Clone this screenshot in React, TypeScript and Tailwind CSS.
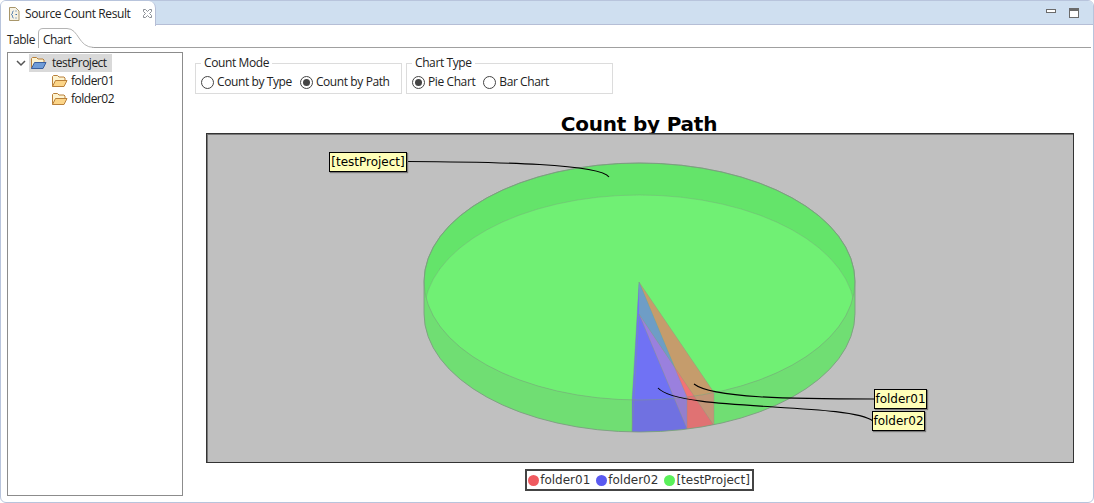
import React from "react";

const ui = { fontFamily: '"Open Sans", "Liberation Sans", sans-serif' };
const dj = { fontFamily: '"DejaVu Sans", sans-serif' };

function Folder({ open = false }: { open?: boolean }) {
  return (
    <svg width="17" height="14" viewBox="0 0 17 14" className="shrink-0">
      <path d="M1.5 12.5V2.5l1-1h4l1.500 1.500h5l1 1v2" fill="#fdf3d0" stroke="#b9803a" />
      <path
        d="M1.5 12.5l3-6h11.500l-3 6z"
        fill={open ? "#6f9cd8" : "#fcd588"}
        stroke={open ? "#3b5f9e" : "#b9803a"}
      />
    </svg>
  );
}

function Radio({ checked, label }: { checked?: boolean; label: string }) {
  return (
    <span className="flex items-center gap-[3px]">
      <span className="w-[13px] h-[13px] rounded-full border border-[#444] bg-white flex items-center justify-center">
        {checked && <span className="w-[7px] h-[7px] rounded-full bg-[#444]" />}
      </span>
      <span>{label}</span>
    </span>
  );
}

function Group({ title, w, children }: { title: string; w: string; children: React.ReactNode }) {
  return (
    <fieldset className={`${w} h-[37px] border border-[#dcdcdc] pl-[5px] flex`}>
      <legend className="px-[3px] text-[12px] leading-[12px] text-[#222]">{title}</legend>
      <div className="flex items-start gap-[8px] text-[12px] leading-[16px] text-[#222] mt-[5px]">{children}</div>
    </fieldset>
  );
}

function Tip({ text, className }: { text: string; className: string }) {
  return (
    <div
      style={dj}
      className={`absolute h-[20px] bg-[#ffffb8] border border-black shadow-[1px_1px_1px_#777] text-[12px] leading-[18px] text-black text-center tracking-normal whitespace-nowrap ${className}`}
    >
      {text}
    </div>
  );
}

function Pie() {
  const cx = 639.5, rx = 215.5, ry = 118.5, ty = 281.5, by = 313.5;
  const T = "639,282", B = "639,314";
  const hull = `M${cx - rx} ${ty} A${rx} ${ry} 0 0 1 ${cx + rx} ${ty} V${by} A${rx} ${ry} 0 0 1 ${cx - rx} ${by} Z`;
  return (
    <svg width="866" height="328" viewBox="207 134 866 328" className="block">
      <defs>
        <clipPath id="topClip">
          <ellipse cx={cx} cy={ty} rx={rx} ry={ry} />
        </clipPath>
        <clipPath id="hullClip">
          <path d={hull} />
        </clipPath>
      </defs>
      <path d={hull} fill="#70f074" />
      <ellipse cx={cx} cy={ty} rx={rx} ry={ry} fill="#64e46a" />
      <ellipse cx={cx} cy={by} rx={rx} ry={ry} fill="#70f074" clipPath="url(#topClip)" />

      <g clipPath="url(#hullClip)">
        <path d={`M${T} L714 392.6 A${rx} ${ry} 0 0 1 687 397 Z`} fill="#c59c6c" />
        <path d={`M${T} L687 397 A${rx} ${ry} 0 0 1 632 400 Z`} fill="#6e9dc6" />
        <path d="M687 397 L714 392.6 V425 L687 429 Z" fill="#cf9c78" />
        <path d="M632 400 L687 397 V429 L632 432 Z" fill="#8f78dc" />
        <path d={`M${B} L713.5 425 A${rx} ${ry} 0 0 1 687 429 Z`} fill="#f37374" />
        <path d={`M${B} L674.7 367.6 L687 397 V429 Z`} fill="#9a80de" />
        <path d={`M${B} L687 429 A${rx} ${ry} 0 0 1 632 432 V400 L639 314 Z`} fill="#7072f4" />
        <path d={`M${T} L${B} L632.5 400 Z`} fill="#7072f4" />
        <path d={`M${T} L639 314 L674.7 367.6 Z`} fill="#6e9dc6" />
      </g>

      <path
        d={`M${cx - rx} ${ty} A${rx} ${ry} 0 0 0 ${cx + rx} ${ty} V${by} A${rx} ${ry} 0 0 1 ${cx - rx} ${by} Z`}
        fill="#707070"
        fillOpacity="0.14"
      />

      <g fill="none" stroke="#7d9a80" strokeOpacity="0.85" strokeWidth="1">
        <path d={hull} />
        <ellipse cx={cx} cy={ty} rx={rx} ry={ry} strokeOpacity="0.5" />
        <ellipse cx={cx} cy={by} rx={rx} ry={ry} strokeOpacity="0.35" clipPath="url(#topClip)" />
        <path
          d="M639 282 L632 400 V432 M639 282 L687 397 V429 M639 282 L714 392.6 V425 M639 314 L632 432 M639 314 L687 429 M639 314 L713.5 425"
          strokeOpacity="0.35"
        />
      </g>

      <g fill="none" stroke="#000" strokeWidth="1.1">
        <path d="M407 161.5 C 500 162, 600 164, 609 177" />
        <path d="M874 399 C 790 399, 712 398, 694 384" />
        <path d="M873 421 C 848 402, 680 412, 658 388" />
      </g>
    </svg>
  );
}

export default function App() {
  return (
    <div style={ui} className="w-[1094px] h-[503px] bg-white border border-[#b8c4dc] rounded-[6px] flex flex-col overflow-hidden text-[#222] tracking-[-0.4px]">
      <div className="h-[24px] bg-[#cfdff0] border-b border-[#b5bed6] flex items-stretch justify-between shrink-0">
        <div className="w-[155px] h-[25px] bg-white rounded-tr-[7px] border-r border-[#b5bed6] flex items-center pl-[6px] gap-[4px] text-[12px]">
          <svg width="14" height="16" viewBox="0 0 14 16" className="shrink-0">
            <path d="M2.500 1.500h6l3.500 3.500v9.500h-9.500z" fill="#f6f2e4" stroke="#a8966a" />
            <path d="M6.500 5C5 5 6 8 4.500 8.500 6 9 5 12 6.500 12M8.500 5h1M8.500 8.500h1.500M8.500 12h1" fill="none" stroke="#3b6ea8" />
          </svg>
          <span className="whitespace-nowrap">Source Count Result</span>
          <svg width="11" height="11" viewBox="0 0 11 11" className="ml-[7px]">
            <path d="M1.500 1.500h2l2 2 2-2h2v2l-2 2 2 2v2h-2l-2-2-2 2h-2v-2l2-2-2-2z" fill="#fff" stroke="#8a8f96" />
          </svg>
        </div>
        <div className="flex items-start gap-[13px] pt-[7px] pr-[14px]">
          <div className="w-[10px] h-[4px] mt-[1px] border border-[#6b6b6b] bg-white" />
          <div className="w-[10px] h-[10px] border border-[#6b6b6b] bg-white border-t-[3px]" />
        </div>
      </div>

      <div className="relative h-[23px] flex items-end mr-[2px] shrink-0 text-[12px] leading-[16px] tracking-[-0.5px]">
        <span className="pl-[6px]">Table</span>
        <span className="pl-[8px]">Chart</span>
        <span className="flex-1 ml-[21px] border-b border-[#a0a0a0]" />
        <svg width="60" height="23" viewBox="0 0 60 23" className="absolute left-[37px] top-0">
          <path d="M0.500 23V8Q0.500 3.500 5 3.500H29C41 3.500 40 22.500 56 22.500" fill="none" stroke="#b4b4b4" />
        </svg>
      </div>

      <div className="flex-1 flex min-h-0 pl-[6px] pt-[4px] pb-[6px]">
        <div className="w-[176px] border border-[#8c8c8c] shrink-0 pt-[1px] text-[12px] leading-[18px] tracking-[-0.5px]">
          <div className="flex items-center h-[18px] pl-[7px]">
            <svg width="12" height="12" viewBox="0 0 12 12" className="mr-[2px]">
              <path d="M2 4l4 4 4-4" fill="none" stroke="#555" strokeWidth="1.500" />
            </svg>
            <span className="flex items-center bg-[#d9d9d9] w-[83px] pl-[1px] h-[18px] gap-[5px]">
              <Folder open />
              <span>testProject</span>
            </span>
          </div>
          <div className="flex items-center h-[18px] pl-[43px] gap-[3px]">
            <Folder />
            <span>folder01</span>
          </div>
          <div className="flex items-center h-[18px] pl-[43px] gap-[3px]">
            <Folder />
            <span>folder02</span>
          </div>
        </div>

        <div className="flex-1 flex flex-col pl-[12px] min-w-0">
          <div className="flex gap-[4px] pt-[5px]">
            <Group title="Count Mode" w="w-[207px]">
              <Radio label="Count by Type" />
              <Radio checked label="Count by Path" />
            </Group>
            <Group title="Chart Type" w="w-[207px]">
              <Radio checked label="Pie Chart" />
              <Radio label="Bar Chart" />
            </Group>
          </div>

          <div style={dj} className="text-center mt-[18px] h-[21px] w-[888px] text-[20px] font-bold leading-[24px] tracking-[-0.2px] text-black whitespace-nowrap">
            Count by Path
          </div>

          <div className="relative ml-[11px] w-[868px] h-[330px] bg-[#c0c0c0] border border-[#333] shadow-[inset_1px_1px_0_#777] shrink-0">
            <Pie />
            <Tip text="[testProject]" className="left-[122px] top-[18px] w-[78px]" />
            <Tip text="folder01" className="left-[667px] top-[255px] w-[53px]" />
            <Tip text="folder02" className="left-[665px] top-[277px] w-[53px]" />
          </div>

          <div className="flex justify-center mt-[6px] w-[888px]">
            <div style={dj} className="h-[22px] ml-[1px] border-2 border-[#444] flex items-center pl-[1px] pr-[2px] text-[12px] text-[#333] tracking-normal whitespace-nowrap bg-white">
              <span className="w-[11px] h-[11px] rounded-full bg-[#f05a60] mr-[1px]" />
              <span className="mr-[6px]">folder01</span>
              <span className="w-[11px] h-[11px] rounded-full bg-[#5a5af0] mr-[1px]" />
              <span className="mr-[6px]">folder02</span>
              <span className="w-[11px] h-[11px] rounded-full bg-[#5af05a] mr-[1px]" />
              <span>[testProject]</span>
            </div>
          </div>
        </div>
      </div>
    </div>
  );
}
